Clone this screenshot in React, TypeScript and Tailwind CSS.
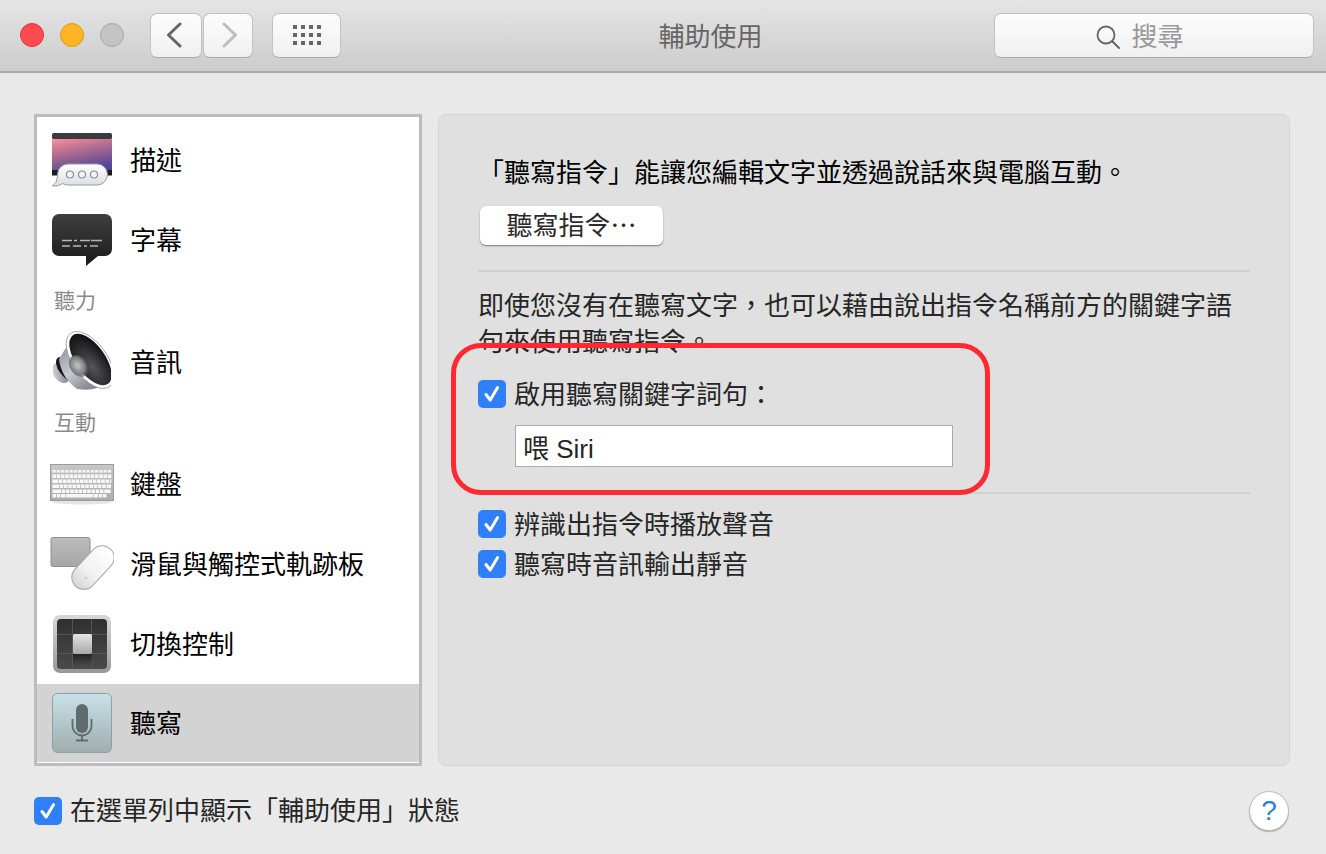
import React from 'react'

const FONT = '"Liberation Sans", "Noto Sans CJK TC", sans-serif'

const Check = ({ className = '' }: { className?: string }) => (
  <span className={`flex h-[28px] w-[28px] shrink-0 items-center justify-center rounded-[5px] bg-[#2f7ff8] ${className}`}>
    <svg width="20" height="20" viewBox="0 0 20 20" fill="none">
      <path d="M4 10.5 L8.2 16 L15.6 3.6" stroke="#fff" strokeWidth="3" strokeLinecap="round" strokeLinejoin="round" />
    </svg>
  </span>
)

const CheckRow = ({ label }: { label: string }) => (
  <div className="flex h-[36px] items-center">
    <Check />
    <span className="ml-[8px] pt-[2px] text-[26px] leading-[36px] text-[#262626]">{label}</span>
  </div>
)

const DescIcon = () => (
  <svg width="60" height="54" viewBox="0 0 60 54">
    <defs>
      <linearGradient id="descBg" x1="0.2" y1="0" x2="0.6" y2="1">
        <stop offset="0" stopColor="#f08a9c" />
        <stop offset="0.45" stopColor="#a9688f" />
        <stop offset="1" stopColor="#4f479b" />
      </linearGradient>
      <linearGradient id="descBubble" x1="0" y1="0" x2="0" y2="1">
        <stop offset="0" stopColor="#ffffff" />
        <stop offset="1" stopColor="#d9dde2" />
      </linearGradient>
    </defs>
    <rect x="0" y="0" width="60" height="6" rx="1.5" fill="#3b3b3d" />
    <rect x="0" y="6" width="60" height="31" fill="url(#descBg)" />
    <rect x="0" y="37" width="60" height="5.500" fill="#1c1c1e" />
    <path d="M16 31 H45 A10.500 10.500 0 0 1 45 52 H16 Q13 52 10.500 50.500 Q6 54 0.500 53 Q5 50 5.500 44 V41.500 A10.500 10.500 0 0 1 16 31 Z" fill="url(#descBubble)" stroke="#9a9ca6" strokeWidth="1" />
    <circle cx="18" cy="41.500" r="3.500" fill="#f6f6f6" stroke="#8d8f96" strokeWidth="1.200" />
    <circle cx="30" cy="41.500" r="3.500" fill="#f6f6f6" stroke="#8d8f96" strokeWidth="1.200" />
    <circle cx="42" cy="41.500" r="3.500" fill="#f6f6f6" stroke="#8d8f96" strokeWidth="1.200" />
  </svg>
)

const CaptionIcon = () => (
  <svg width="60" height="52" viewBox="0 0 60 52">
    <defs>
      <linearGradient id="capBg" x1="0" y1="0" x2="0" y2="1">
        <stop offset="0" stopColor="#3f3f41" />
        <stop offset="1" stopColor="#1a1a1a" />
      </linearGradient>
    </defs>
    <path d="M7 0 H53 A7 7 0 0 1 60 7 V35 A7 7 0 0 1 53 42 H46 L34 52 V42 H7 A7 7 0 0 1 0 35 V7 A7 7 0 0 1 7 0 Z" fill="url(#capBg)" />
    <path d="M10 26.500 H20 M22 26.500 H25 M28 26.500 H38 M39 26.500 H50 M10 32 H18 M21 32 H29 M32 32 H35 M38 32 H46" stroke="#b5b5b5" strokeWidth="1.500" />
  </svg>
)

const SpeakerIcon = () => (
  <svg width="58" height="62" viewBox="0 0 58 62">
    <defs>
      <linearGradient id="spkBack" x1="0" y1="0" x2="1" y2="1">
        <stop offset="0" stopColor="#e2e2e8" />
        <stop offset="0.5" stopColor="#a9a9b6" />
        <stop offset="1" stopColor="#6e6e7a" />
      </linearGradient>
      <linearGradient id="spkBody" x1="0" y1="0" x2="0.6" y2="1">
        <stop offset="0" stopColor="#8a8a94" />
        <stop offset="0.6" stopColor="#c9c9d2" />
        <stop offset="1" stopColor="#8b8b96" />
      </linearGradient>
      <radialGradient id="spkCone" cx="0.4" cy="0.62" r="0.6">
        <stop offset="0" stopColor="#55555a" />
        <stop offset="1" stopColor="#141416" />
      </radialGradient>
      <radialGradient id="spkDome" cx="0.45" cy="0.45" r="0.6">
        <stop offset="0" stopColor="#c2c8c9" />
        <stop offset="0.6" stopColor="#7d8386" />
        <stop offset="1" stopColor="#3a3d40" stopOpacity="0.300" />
      </radialGradient>
    </defs>
    <ellipse cx="8" cy="42" rx="7.500" ry="11" transform="rotate(-36 8 42)" fill="url(#spkBack)" />
    <ellipse cx="13" cy="38" rx="7" ry="14" transform="rotate(-36 13 38)" fill="#17171a" />
    <path d="M16 12 L6 28 Q8 46 24 58 Q38 60 46 56 Z" fill="url(#spkBody)" />
    <ellipse cx="37" cy="29" rx="17" ry="33" transform="rotate(-36 37 29)" fill="#ffffff" stroke="#9a9aa0" strokeWidth="0.800" />
    <ellipse cx="37.500" cy="28.500" rx="14.500" ry="30" transform="rotate(-36 37.500 28.500)" fill="url(#spkCone)" />
    <ellipse cx="26" cy="35" rx="9" ry="12" transform="rotate(-36 26 35)" fill="url(#spkDome)" />
  </svg>
)

const KeyboardIcon = () => {
  const rows = [
    { y: 10.500, x: 2, keys: [4, 4, 4, 4, 4, 4, 4, 4, 4, 4, 4, 4, 4, 4] },
    { y: 15.500, x: 2, keys: [6, 4, 4, 4, 4, 4, 4, 4, 4, 4, 4, 4, 4, 2] },
    { y: 20.500, x: 2, keys: [7, 4, 4, 4, 4, 4, 4, 4, 4, 4, 4, 4, 5] },
    { y: 25.500, x: 2, keys: [9, 4, 4, 4, 4, 4, 4, 4, 4, 4, 4, 7] },
    { y: 30, x: 2, keys: [4, 4, 5, 27, 5, 4, 4] },
  ]
  return (
    <svg width="64" height="41" viewBox="0 0 64 41">
      <defs>
        <linearGradient id="kbBg" x1="0" y1="0" x2="0" y2="1">
          <stop offset="0" stopColor="#c8c8c8" />
          <stop offset="1" stopColor="#adadad" />
        </linearGradient>
      </defs>
      <ellipse cx="32" cy="38" rx="30" ry="2.500" fill="#e4e4e4" />
      <rect x="0.500" y="0.500" width="63" height="36" fill="url(#kbBg)" stroke="#9a9a9a" />
      {Array.from({ length: 14 }).map((_, i) => (
        <rect key={i} x={2.500 + i * 4.250} y="6" width="3.200" height="2.500" fill="#f5f5f5" />
      ))}
      {rows.map((r, ri) => {
        let x = r.x + 0.500
        return r.keys.map((w, i) => {
          const el = <rect key={`${ri}-${i}`} x={x} y={r.y} width={w - 0.500} height="3.500" fill="#f7f7f7" />
          x += w + 0.250
          return el
        })
      })}
    </svg>
  )
}

const MouseIcon = () => (
  <svg width="64" height="54" viewBox="0 0 64 54">
    <defs>
      <linearGradient id="padBg" x1="0" y1="0" x2="0" y2="1">
        <stop offset="0" stopColor="#bcbcbc" />
        <stop offset="1" stopColor="#a6a6a6" />
      </linearGradient>
      <linearGradient id="mouseBg" x1="0" y1="0" x2="0" y2="1">
        <stop offset="0" stopColor="#ffffff" />
        <stop offset="0.6" stopColor="#f2f2f2" />
        <stop offset="1" stopColor="#d6d6d6" />
      </linearGradient>
    </defs>
    <rect x="1" y="0.500" width="39" height="29" rx="2" fill="url(#padBg)" stroke="#8f8f8f" />
    <rect x="31" y="5" width="24" height="51" rx="12" transform="rotate(43 43 30.500)" fill="url(#mouseBg)" stroke="#a8a8a8" strokeWidth="1" />
    <circle cx="36" cy="41" r="1.500" fill="#cfcfcf" />
  </svg>
)

const SwitchIcon = () => (
  <svg width="58" height="58" viewBox="0 0 58 58">
    <defs>
      <linearGradient id="swFrame" x1="0" y1="0" x2="0" y2="1">
        <stop offset="0" stopColor="#d8d8d8" />
        <stop offset="1" stopColor="#989898" />
      </linearGradient>
      <linearGradient id="swInner" x1="0" y1="0" x2="0" y2="1">
        <stop offset="0" stopColor="#303030" />
        <stop offset="1" stopColor="#4a4a4a" />
      </linearGradient>
      <linearGradient id="swKey" x1="0" y1="0" x2="0" y2="1">
        <stop offset="0" stopColor="#e4e4e4" />
        <stop offset="1" stopColor="#a8a8a8" />
      </linearGradient>
      <linearGradient id="swShadow" x1="0" y1="0" x2="0" y2="1">
        <stop offset="0" stopColor="#111" stopOpacity="0.700" />
        <stop offset="1" stopColor="#111" stopOpacity="0" />
      </linearGradient>
    </defs>
    <rect x="0" y="0" width="58" height="58" rx="7" fill="url(#swFrame)" />
    <rect x="4" y="4" width="50" height="50" rx="4" fill="url(#swInner)" />
    <path d="M19.500 4 V54 M38.500 4 V54 M4 19.500 H54 M4 38.500 H54" stroke="#5c5c5c" strokeWidth="0.800" />
    <rect x="20" y="38" width="19" height="12" fill="url(#swShadow)" />
    <rect x="20" y="19" width="19" height="20" rx="1.500" fill="url(#swKey)" />
  </svg>
)

const MicIcon = () => (
  <svg width="60" height="60" viewBox="0 0 60 60">
    <defs>
      <linearGradient id="micBg" x1="0" y1="0" x2="0" y2="1">
        <stop offset="0" stopColor="#c9e1e9" />
        <stop offset="1" stopColor="#9fadad" />
      </linearGradient>
    </defs>
    <rect x="0.500" y="0.500" width="59" height="59" rx="5" fill="url(#micBg)" stroke="#8fa0a3" />
    <rect x="24" y="11" width="12" height="29" rx="6" fill="#5f6c6f" />
    <path d="M20.500 26 V33 A9.500 9.500 0 0 0 39.500 33 V26" fill="none" stroke="#5f6c6f" strokeWidth="1.800" />
    <path d="M30 43 V47 M24 47.500 H36" stroke="#5f6c6f" strokeWidth="1.800" />
  </svg>
)

const Row = ({ icon, label, active }: { icon: React.ReactNode; label: string; active?: boolean }) => (
  <div className={`flex items-center ${active ? 'h-[78px] bg-[#d3d3d3]' : 'h-[80px]'}`}>
    <div className="flex w-[93px] shrink-0 justify-center pr-[3px]">{icon}</div>
    <span className="pt-[2px] text-[26px] leading-[36px] text-black">{label}</span>
  </div>
)

const Group = ({ label }: { label: string }) => (
  <div className="flex h-[42px] items-center pl-[17px] text-[21px] text-[#8a8a8a]">{label}</div>
)

const ToolButton = ({ children, className = '' }: { children: React.ReactNode; className?: string }) => (
  <div className={`flex h-[45px] items-center justify-center rounded-[7px] border border-[#c2c2c2] border-b-[#aaaaaa] bg-gradient-to-b from-[#fdfdfd] to-[#f0f0f0] ${className}`}>
    {children}
  </div>
)

export default function App() {
  return (
    <div className="h-[854px] w-[1326px] overflow-hidden bg-[#e8e9e8]" style={{ fontFamily: FONT }}>
      <div className="relative flex h-[73px] items-center justify-between border-b-2 border-[#a9a9a9] bg-gradient-to-b from-[#e5e5e5] to-[#cccccc] pb-[1px]">
        <div className="flex items-center">
          <div className="ml-[20px] h-[24px] w-[24px] rounded-full border border-[#e0343a] bg-[#fc4a4e]" />
          <div className="ml-[16px] h-[24px] w-[24px] rounded-full border border-[#dd9a18] bg-[#fdb425]" />
          <div className="ml-[16px] h-[24px] w-[24px] rounded-full border border-[#a8a8a8] bg-[#c4c4c4]" />
          <ToolButton className="ml-[26px] w-[52px] pr-[5px]">
            <svg width="18" height="26" viewBox="0 0 18 26" fill="none">
              <path d="M15 2 L3.500 13 L15 24" stroke="#666" strokeWidth="3" strokeLinecap="round" strokeLinejoin="round" />
            </svg>
          </ToolButton>
          <ToolButton className="ml-[1px] w-[50px] pl-[3px]">
            <svg width="18" height="26" viewBox="0 0 18 26" fill="none">
              <path d="M3 2 L14.500 13 L3 24" stroke="#bdbdbd" strokeWidth="3" strokeLinecap="round" strokeLinejoin="round" />
            </svg>
          </ToolButton>
          <ToolButton className="ml-[19px] w-[69px]">
            <svg width="30" height="22" viewBox="0 0 30 22" fill="#666">
              {[1, 9, 17, 25].map((x) =>
                [1, 9, 17].map((y) => <rect key={`${x}-${y}`} x={x} y={y} width="4" height="4" />),
              )}
            </svg>
          </ToolButton>
        </div>
        <div className="pl-[86px] pt-[3px] text-[26px] leading-[36px] text-[#666666]">輔助使用</div>
        <ToolButton className="mr-[12px] w-[320px] gap-[10px] pr-[29px]">
          <svg width="26" height="26" viewBox="0 0 26 26" fill="none" className="mt-[3px]">
            <circle cx="11" cy="11" r="8.500" stroke="#666" strokeWidth="1.800" />
            <path d="M17.500 17.500 L24 24" stroke="#666" strokeWidth="2" strokeLinecap="round" />
          </svg>
          <span className="pt-[4px] text-[26px] leading-[36px] text-[#999999]">搜尋</span>
        </ToolButton>
      </div>

      <div className="flex gap-[16px] pl-[34px] pt-[41px]">
        <div className="h-[652px] w-[388px] border-[3px] border-[#bcbcbc] bg-white pt-[3px]">
          <Row icon={<DescIcon />} label="描述" />
          <Row icon={<CaptionIcon />} label="字幕" />
          <Group label="聽力" />
          <Row icon={<SpeakerIcon />} label="音訊" />
          <Group label="互動" />
          <Row icon={<KeyboardIcon />} label="鍵盤" />
          <Row icon={<MouseIcon />} label="滑鼠與觸控式軌跡板" />
          <Row icon={<SwitchIcon />} label="切換控制" />
          <Row icon={<MicIcon />} label="聽寫" active />
        </div>

        <div className="relative h-[652px] w-[852px] rounded-[8px] border border-[#d4d5d4] bg-[#dfe0df] px-[39px] pt-[40px]">
          <p className="text-[26px] leading-[36px] text-black">「聽寫指令」能讓您編輯文字並透過說話來與電腦互動。</p>
          <div className="ml-[2px] mt-[15px] flex h-[39px] w-[183px] items-center justify-center rounded-[6px] bg-white text-[26px] leading-[36px] text-[#2b2b2b] shadow-[0_1px_1.500px_rgba(0,0,0,0.45)]">
            聽寫指令⋯
          </div>
          <div className="mt-[25px] h-[2px] bg-[#cfd0cf]" />
          <p className="mt-[16px] text-[26px] leading-[36px] text-[#262626]">
            即使您沒有在聽寫文字，也可以藉由說出指令名稱前方的關鍵字語句來使用聽寫指令。
          </p>
          <div className="mt-[16px]">
            <CheckRow label="啟用聽寫關鍵字詞句：" />
          </div>
          <div className="ml-[37px] mt-[13px] flex h-[42px] w-[438px] items-center border border-[#ababab] bg-white pl-[7px] pt-[5px] text-[26px] leading-[36px] text-[#262626]">
            喂 Siri
          </div>
          <div className="mt-[25px] h-[2px] bg-[#cfd0cf]" />
          <div className="mt-[12px]">
            <CheckRow label="辨識出指令時播放聲音" />
          </div>
          <div className="mt-[4px]">
            <CheckRow label="聽寫時音訊輸出靜音" />
          </div>
          <div className="absolute left-[12px] top-[228px] h-[152px] w-[539px] rounded-[30px] border-[5px] border-[#fc2a30]" />
        </div>
      </div>

      <div className="flex items-center pl-[34px] pr-[37px] pt-[25px]">
        <Check />
        <span className="ml-[8px] text-[26px] leading-[36px] text-[#262626]">在選單列中顯示「輔助使用」狀態</span>
        <div className="ml-auto flex h-[40px] w-[40px] items-center justify-center rounded-full border border-[#bdbdbd] bg-white text-[28px] text-[#2b7de9] shadow-[0_1px_1px_rgba(0,0,0,0.25)]">
          ?
        </div>
      </div>
    </div>
  )
}
